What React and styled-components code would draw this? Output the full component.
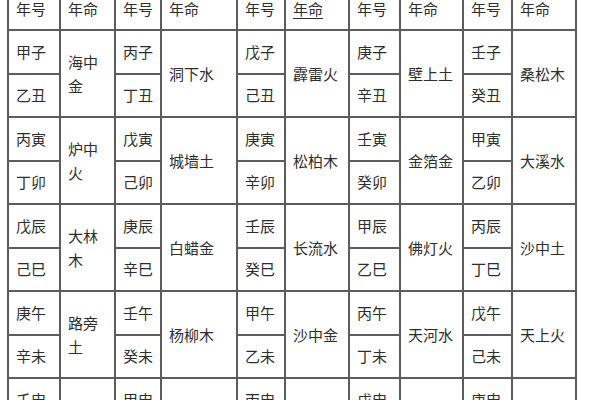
import React from 'react';
import styled, { createGlobalStyle } from 'styled-components';

const GlobalStyle = createGlobalStyle`
  html, body {
    margin: 0;
    padding: 0;
    background: #fff;
    overflow: hidden;
  }
`;

const Page = styled.div`
  width: 600px;
  height: 400px;
  overflow: hidden;
  padding-left: 7px;
  box-sizing: border-box;
`;

const Table = styled.table`
  margin-top: -14px;
  border-collapse: collapse;
  table-layout: fixed;
  width: 570px;
  font-family: "Noto Sans CJK SC", "Noto Sans", sans-serif;
  font-size: 15px;
  color: #2e2e2e;
`;

const HeadRow = styled.tr`
  height: 43px;
`;

const Row = styled.tr`
  height: 43.5px;
`;

const Cell = styled.td`
  border: 2px solid #5c5c5c;
  padding: 0 4px 0 7px;
  vertical-align: middle;
  text-align: left;
  line-height: 24px;
  word-break: break-all;
`;

const HeadCell = styled(Cell).attrs({ as: 'th' })`
  font-weight: normal;
  text-decoration: ${p => (p.$underline ? 'underline' : 'none')};
  text-underline-offset: 3px;
`;

const widths = [52, 55, 46, 76, 48, 64, 51, 63, 49, 64];

const groups = [
  [['甲子', '乙丑', '海中金'], ['丙子', '丁丑', '洞下水'], ['戊子', '己丑', '霹雷火'], ['庚子', '辛丑', '壁上土'], ['壬子', '癸丑', '桑松木']],
  [['丙寅', '丁卯', '炉中火'], ['戊寅', '己卯', '城墙土'], ['庚寅', '辛卯', '松柏木'], ['壬寅', '癸卯', '金箔金'], ['甲寅', '乙卯', '大溪水']],
  [['戊辰', '己巳', '大林木'], ['庚辰', '辛巳', '白蜡金'], ['壬辰', '癸巳', '长流水'], ['甲辰', '乙巳', '佛灯火'], ['丙辰', '丁巳', '沙中土']],
  [['庚午', '辛未', '路旁土'], ['壬午', '癸未', '杨柳木'], ['甲午', '乙未', '沙中金'], ['丙午', '丁未', '天河水'], ['戊午', '己未', '天上火']],
  [['壬申', '癸酉', '剑锋金'], ['甲申', '乙酉', '泉中水'], ['丙申', '丁酉', '山下火'], ['戊申', '己酉', '大驿土'], ['庚申', '辛酉', '石榴木']],
];

export default function App() {
  return (
    <Page>
      <GlobalStyle />
      <Table>
        <colgroup>
          {widths.map((w, i) => (
            <col key={i} style={{ width: w }} />
          ))}
        </colgroup>
        <thead>
          <HeadRow>
            {[0, 1, 2, 3, 4].map(i => (
              <React.Fragment key={i}>
                <HeadCell>年号</HeadCell>
                <HeadCell $underline={i === 2}>年命</HeadCell>
              </React.Fragment>
            ))}
          </HeadRow>
        </thead>
        <tbody>
          {groups.map((g, gi) => (
            <React.Fragment key={gi}>
              <Row>
                {g.map(([a, , ming], i) => (
                  <React.Fragment key={i}>
                    <Cell>{a}</Cell>
                    <Cell rowSpan={2}>{ming}</Cell>
                  </React.Fragment>
                ))}
              </Row>
              <Row>
                {g.map(([, b], i) => (
                  <Cell key={i}>{b}</Cell>
                ))}
              </Row>
            </React.Fragment>
          ))}
        </tbody>
      </Table>
    </Page>
  );
}
